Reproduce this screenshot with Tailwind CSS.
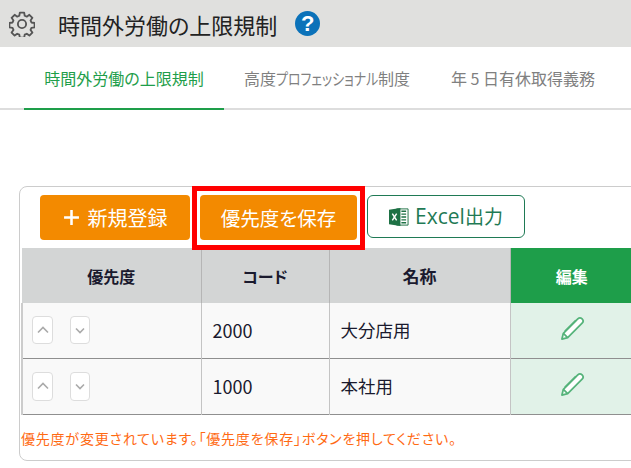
<!DOCTYPE html>
<html lang="ja">
<head>
  <meta charset="UTF-8">
  <meta name="viewport" content="width=device-width, initial-scale=1.0">
  <title>時間外労働の上限規制</title>
  <script src="https://cdn.jsdelivr.net/npm/@tailwindcss/browser@4"></script>
</head>
<body class="bg-white overflow-hidden h-[468px] font-['Noto_Sans_CJK_JP','Noto_Sans',sans-serif] [font-feature-settings:'palt'] text-[#1a1a2e]">
  <!-- 見出し -->
  <header class="h-[47px] bg-[#e0e0de] flex items-center pl-[9px]">
    <svg class="w-[26px] h-[26px] text-[#555]" viewBox="0 0 24 24" fill="none" stroke="currentColor" stroke-width="1.7" stroke-linejoin="round">
      <circle cx="12" cy="12" r="3.8"/>
      <path d="M10 1.500h4l.5 2.900 1.900.8 2.400-1.700 2.800 2.800-1.700 2.400.8 1.900 2.900.5v4l-2.900.5-.8 1.900 1.700 2.400-2.800 2.800-2.400-1.700-1.900.8-.5 2.900h-4l-.5-2.900-1.900-.8-2.400 1.700-2.800-2.800 1.700-2.400-.8-1.900-2.900-.5v-4l2.900-.5.8-1.900-1.700-2.400 2.800-2.800 2.400 1.700 1.900-.8z"/>
    </svg>
    <h1 class="ml-[23px] text-[22px] leading-none font-normal text-[#222] [font-feature-settings:'normal']">時間外労働の上限規制</h1>
    <span class="ml-[18px] w-[25px] h-[25px] rounded-full bg-[#0b72b9] text-white font-bold text-[22px] leading-none flex items-center justify-center font-['Liberation_Sans',sans-serif]">?</span>
  </header>

  <!-- タブ -->
  <nav class="h-[63px] border-b-2 border-[#dddddd] flex pl-[24px] text-[16px] text-[#808080]">
    <a class="h-[63px] w-[200px] shrink-0 flex items-center justify-center border-b-2 border-[#1e9e4a] text-[#1e9e4a] [font-feature-settings:'normal']">時間外労働の上限規制</a>
    <a class="h-[61px] pl-[20px] w-[227px] shrink-0 flex items-center whitespace-nowrap">高度<span class="inline-block w-[102px] origin-left scale-x-[0.81]">プロフェッショナル</span>制度</a>
    <a class="h-[61px] flex items-center whitespace-nowrap">年 5 日有休取得義務</a>
  </nav>

  <!-- 一覧 -->
  <div class="overflow-hidden pl-[19px] pt-[76px]">
    <section class="relative w-[640px] h-[275px] border border-[#cccccc] rounded-[8px] bg-white">
      <div class="flex items-start h-[61px] pt-[8px] pl-[20px]">
        <button class="w-[150px] h-[45px] rounded-[4px] bg-[#f38a00] text-white text-[20px] flex items-center justify-center gap-[8px]">
          <svg class="w-[17px] h-[17px]" viewBox="0 0 16 16" fill="none" stroke="currentColor" stroke-width="2.4"><path d="M8 1v14M1 8h14"/></svg>
          新規登録
        </button>
        <button class="ml-[10px] w-[157px] h-[45px] rounded-[4px] bg-[#f38a00] text-white text-[19.500px]">優先度を保存</button>
        <button class="ml-[10px] w-[158px] h-[43px] rounded-[6px] border border-[#1f7a55] text-[#1f7a55] text-[19px] flex items-center justify-center gap-[6px]">
          <svg class="w-[20px] h-[20px]" viewBox="0 0 21 20">
            <path d="M8 1.500h12v17H8z" fill="#fff" stroke="#1e7145"/>
            <path d="M13 4h5M13 7h5M13 10h5M13 13h5M13 16h5" stroke="#1e7145" stroke-width="1.400"/>
            <path d="M0 2.500 12 .5v19L0 17.500z" fill="#1e7145"/>
            <path d="m3.500 6.500 4.500 7M8 6.500l-4.500 7" stroke="#fff" stroke-width="1.500"/>
          </svg>
          <span><span class="font-['Open_Sans',sans-serif] text-[21px]">Excel</span>出力</span>
        </button>
      </div>

      <table class="w-[612px] ml-[1px] border-collapse table-fixed text-[17.500px]">
        <thead>
          <tr class="h-[55px] bg-[#d3d5d5] text-[16px] font-bold">
            <th class="w-[179px] border-r border-[#b5b5b5]">優先度</th>
            <th class="w-[128px] border-r border-[#b5b5b5]">コード</th>
            <th class="w-[181px] border-r border-[#b5b5b5] text-[17px]">名称</th>
            <th class="bg-[#1e9e4a] text-white">編集</th>
          </tr>
        </thead>
        <tbody>
          <tr class="h-[55px] bg-[#f9f9f9] border-b border-[#8f8f8f]">
            <td class="border-l-2 border-r border-l-[#cccccc] border-r-[#c4c4c4] pl-[9px]">
              <div class="flex gap-[17px] items-center">
                <span class="w-[21px] h-[28px] rounded-[4px] border border-[#dddddd] bg-white flex items-center justify-center">
                  <svg class="w-[12px] h-[8px] text-[#aaa]" viewBox="0 0 12 8" fill="none" stroke="currentColor" stroke-width="1.600"><path d="m1 6.500 5-5 5 5"/></svg>
                </span>
                <span class="w-[20px] h-[28px] rounded-[4px] border border-[#dddddd] bg-white flex items-center justify-center">
                  <svg class="w-[10px] h-[7px] text-[#aaa]" viewBox="0 0 10 7" fill="none" stroke="currentColor" stroke-width="1.600"><path d="m1 1.500 4 4 4-4"/></svg>
                </span>
              </div>
            </td>
            <td class="border-r border-[#c4c4c4] pl-[11px] text-[18px]">2000</td>
            <td class="border-r border-[#c4c4c4] pl-[11px]">大分店用</td>
            <td class="bg-[#e1f2e8]">
              <svg class="w-[25px] h-[25px] ml-[49px] -mt-[4px] text-[#55b37a]" viewBox="0 0 26 26" fill="#fff" stroke="currentColor" stroke-width="1.800" stroke-linejoin="round"><path d="M2 24l1.500-6L18.500 3a2.800 2.800 0 0 1 4.500 4.500L8 22.500z"/><path d="M3.500 18 8 22.500M5 16 16.500 4.500" fill="none"/></svg>
            </td>
          </tr>
          <tr class="h-[56px] bg-[#f9f9f9] border-b border-[#8f8f8f]">
            <td class="border-l-2 border-r border-l-[#cccccc] border-r-[#c4c4c4] pl-[9px]">
              <div class="flex gap-[17px] items-center">
                <span class="w-[21px] h-[29px] rounded-[4px] border border-[#dddddd] bg-white flex items-center justify-center">
                  <svg class="w-[12px] h-[8px] text-[#aaa]" viewBox="0 0 12 8" fill="none" stroke="currentColor" stroke-width="1.600"><path d="m1 6.500 5-5 5 5"/></svg>
                </span>
                <span class="w-[20px] h-[29px] rounded-[4px] border border-[#dddddd] bg-white flex items-center justify-center">
                  <svg class="w-[10px] h-[7px] text-[#aaa]" viewBox="0 0 10 7" fill="none" stroke="currentColor" stroke-width="1.600"><path d="m1 1.500 4 4 4-4"/></svg>
                </span>
              </div>
            </td>
            <td class="border-r border-[#c4c4c4] pl-[11px] text-[18px]">1000</td>
            <td class="border-r border-[#c4c4c4] pl-[11px]">本社用</td>
            <td class="bg-[#e1f2e8]">
              <svg class="w-[25px] h-[25px] ml-[49px] -mt-[4px] text-[#55b37a]" viewBox="0 0 26 26" fill="#fff" stroke="currentColor" stroke-width="1.800" stroke-linejoin="round"><path d="M2 24l1.500-6L18.500 3a2.800 2.800 0 0 1 4.500 4.500L8 22.500z"/><path d="M3.500 18 8 22.500M5 16 16.500 4.500" fill="none"/></svg>
            </td>
          </tr>
        </tbody>
      </table>
      <p class="mt-[13px] ml-[1px] text-[14px] leading-[20px] tracking-[0.8px] whitespace-nowrap text-[#ff6a13]">優先度が変更されています。「優先度を保存」ボタンを押してください。</p>

      <!-- 強調枠 -->
      <div class="absolute left-[172px] -top-[1px] w-[173px] h-[64px] border-[5px] border-[#ff0000]"></div>
    </section>
  </div>
</body>
</html>
